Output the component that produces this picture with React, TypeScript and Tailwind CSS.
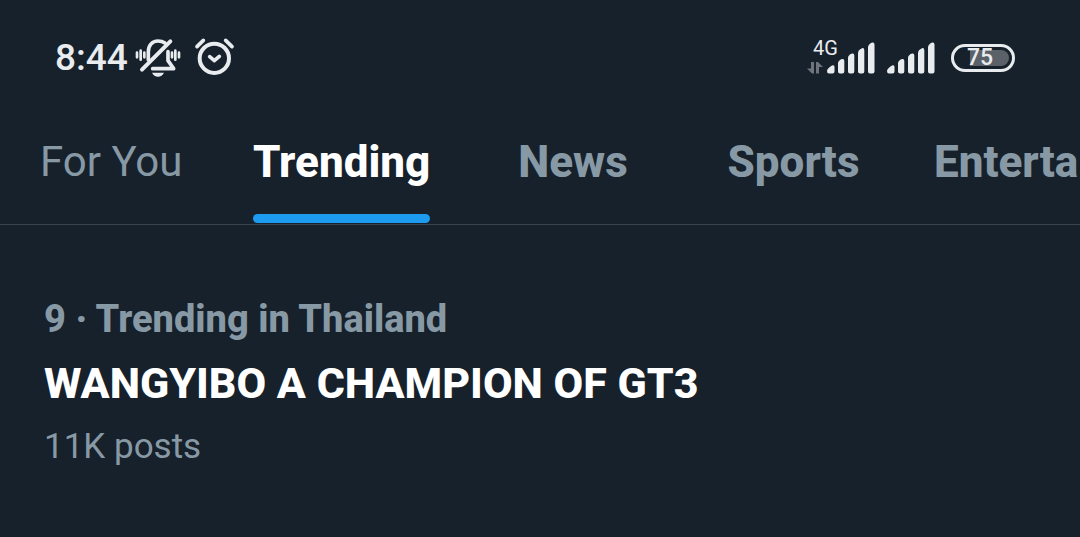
import React, { useState } from "react";
import clsx from "clsx";

interface Tab {
  name: string;
  className: string;
}

const TABS: Tab[] = [
  { name: "For You", className: "w-[217px] pl-10 text-[42px] font-normal" },
  { name: "Trending", className: "w-[248px] px-9 text-[44px] font-extrabold" },
  { name: "News", className: "w-[216px] justify-center text-[44px] font-extrabold" },
  { name: "Sports", className: "w-[225px] justify-center text-[44px] font-extrabold" },
  { name: "Entertainment", className: "px-7 text-[44px] font-extrabold" },
];

const SilentIcon: React.FC = () => (
  <svg viewBox="285 36 138 126" className="h-[42px] w-[46px]" fill="none" stroke="currentColor" strokeLinecap="round">
    {/* Sound bars */}
    <path strokeWidth="8" d="M291 83v14M302 77v27M313 83v14M396 83v14M406 77v27M417 83v14" />
    {/* Bell */}
    <path strokeWidth="11" strokeLinejoin="round" d="M325 104V80C325 62 336 48 354 48C362 48 369 50 375 54M384 80V107L401 131H338" />
    <path strokeWidth="12" d="M391 49L306 134" />
    <path fill="currentColor" stroke="none" d="M336 143H372C368 151 362 155 354 155C346 155 340 151 336 143Z" />
  </svg>
);

const AlarmIcon: React.FC = () => (
  <svg viewBox="462 36 123 126" className="h-[42px] w-[41px]" fill="none" stroke="currentColor" strokeLinecap="round">
    <circle cx="523" cy="100" r="44" strokeWidth="12" />
    <path strokeWidth="11" d="M471 65L490 46M576 65L557 46" />
    <path strokeWidth="11" strokeLinejoin="round" d="M509 95L523 107L538 94" />
  </svg>
);

const SignalIcon: React.FC = () => (
  <svg viewBox="0 0 48 32" className="h-8 w-12" fill="currentColor">
    <path d="M0 29q0-2.500 5-5.500q2.500-1 2.500 1.500v4.500q0 2-2 2H2q-2 0-2-2.500zM11 21.500q0-3 4-4.500q2.300-0.500 2.300 2v10.500q0 2-2 2H13q-2 0-2-2zM21 16q0-3 4-4.500q2.300-0.500 2.300 2v16q0 2-2 2H23q-2 0-2-2zM31 11q0-3 4-4.800q2.300-0.500 2.300 2v21.300q0 2-2 2H33q-2 0-2-2zM41 5.500q0-3 4-5q2.500-0.500 2.500 2v27q0 2-2 2H43q-2 0-2-2z" />
  </svg>
);

const StatusBar: React.FC = () => (
  <header className="flex h-[100px] items-center justify-between pt-4 pr-[65px] pl-[55px] font-[Roboto,sans-serif] text-[#e9ecef]">
    <div className="flex items-center">
      <time className="w-20 text-[37px] leading-10 font-medium">8:44</time>
      <SilentIcon />
      <span className="w-[13px]" />
      <AlarmIcon />
    </div>
    <div className="flex items-center">
      <div className="relative flex pl-5">
        <span className="absolute -top-1 left-1.5 text-[20px] leading-5">4G</span>
        <svg viewBox="0 0 16 12" className="absolute bottom-0 left-0 h-3 w-4" fill="#6d747b">
          <path d="M4 0h3v11.500H5L0 6.500h4zM9 0h2l5 5h-4v6.500H9z" />
        </svg>
        <SignalIcon />
      </div>
      <span className="w-3" />
      <SignalIcon />
      <div className="relative ml-4 flex h-7 w-16 items-center justify-center rounded-full border-[3px] border-current">
        <span className="absolute inset-y-[3px] right-[3px] left-4 rounded-r-full bg-[#5a6168]" />
        <span className="relative mr-1.5 text-[23px] leading-6 font-medium">75</span>
      </div>
    </div>
  </header>
);

const App: React.FC = () => {
  const [active, setActive] = useState("Trending");

  return (
    <div className="min-h-screen overflow-hidden bg-[#17212b] font-[Roboto,sans-serif] text-[#8899a6]">
      <StatusBar />

      {/* Tabs */}
      <nav className="flex h-[125px] overflow-hidden border-b border-[#38444d]">
        {TABS.map((tab) => (
          <button
            key={tab.name}
            type="button"
            onClick={() => setActive(tab.name)}
            className={clsx(
              "flex shrink-0 text-left leading-[124px]",
              tab.name === active && "text-white",
              tab.className
            )}
          >
            <span className="relative block h-[124px]">
              {tab.name}
              {tab.name === active && (
                <span className="absolute inset-x-0 bottom-px h-[9px] rounded-full bg-[#1d9bf0]" />
              )}
            </span>
          </button>
        ))}
      </nav>

      {/* Trend */}
      <main className="px-11 pt-[68px]">
        <p className="text-[38px] leading-[52px] font-extrabold">9 · Trending in Thailand</p>
        <h1 className="mt-2 text-[43px] leading-[60px] font-extrabold text-white">WANGYIBO A CHAMPION OF GT3</h1>
        <p className="mt-2 text-[35px] leading-[52px]">11K posts</p>
      </main>
    </div>
  );
};

export default App;
